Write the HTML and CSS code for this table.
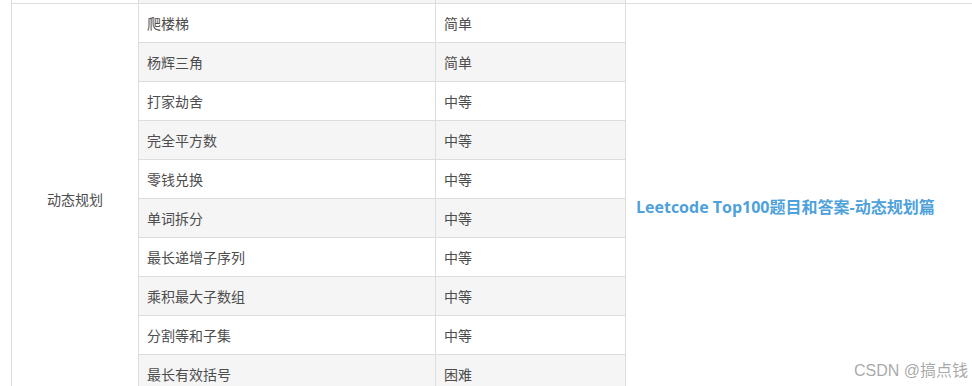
FILE: index.html
```html
<!DOCTYPE html>
<html lang="zh-CN">
<head>
<meta charset="utf-8">
<title>Leetcode Top100</title>
<link rel="stylesheet" href="styles.css">
</head>
<body>
<div class="wrap">
<table class="tbl">
<colgroup>
<col class="c1"><col class="c2"><col class="c3"><col class="c4">
</colgroup>
<tbody>
<tr class="prev"><td class="plain"></td><td></td><td></td><td class="plain"></td></tr>
<tr><td class="cat" rowspan="10">动态规划</td><td>爬楼梯</td><td>简单</td><td class="link" rowspan="10"><a href="#">Leetcode Top100题目和答案-动态规划篇</a></td></tr>
<tr class="alt"><td>杨辉三角</td><td>简单</td></tr>
<tr><td>打家劫舍</td><td>中等</td></tr>
<tr class="alt"><td>完全平方数</td><td>中等</td></tr>
<tr><td>零钱兑换</td><td>中等</td></tr>
<tr class="alt"><td>单词拆分</td><td>中等</td></tr>
<tr><td>最长递增子序列</td><td>中等</td></tr>
<tr class="alt"><td>乘积最大子数组</td><td>中等</td></tr>
<tr><td>分割等和子集</td><td>中等</td></tr>
<tr class="alt"><td>最长有效括号</td><td>困难</td></tr>
</tbody>
</table>
</div>
<div class="watermark">CSDN @搞点钱</div>
</body>
</html>
```
FILE: styles.css
```css
html, body {
  margin: 0;
  padding: 0;
  background: #fff;
  overflow: hidden;
  width: 972px;
  height: 386px;
}
body {
  font-family: "Noto Sans CJK SC", "Noto Sans", sans-serif;
  color: #4d4d4d;
  font-size: 14px;
  position: relative;
}
.wrap {
  padding-left: 11px;
  margin-top: -36px;
}
.tbl {
  border-collapse: collapse;
  table-layout: fixed;
  width: 1000px;
}
.c1 { width: 127px; }
.c2 { width: 297px; }
.c3 { width: 190px; }
.c4 { width: 386px; }
.tbl td {
  border: 1px solid #ddd;
  height: 39px;
  padding: 0 8px;
  line-height: 22px;
  box-sizing: border-box;
  vertical-align: middle;
  background: #fff;
}
.tbl tr.prev td { background: #f5f5f5; }
.tbl tr.prev td.plain { background: #fff; }
.tbl tr.alt td { background: #f5f5f5; }
.tbl td.cat {
  text-align: center;
  background: #fff;
}
.tbl td.link {
  background: #fff;
  padding: 16px 10px 0 10px;
}
.tbl td.link a {
  color: #4ea1db;
  font-weight: bold;
  font-size: 16px;
  text-decoration: none;
  font-family: "Open Sans", "Noto Sans CJK SC", sans-serif;
}
.watermark {
  position: absolute;
  right: 4px;
  top: 357px;
  font-size: 16px;
  color: rgba(153, 153, 153, 0.85);
  font-family: "Liberation Sans", "Noto Sans CJK SC", sans-serif;
}
```
